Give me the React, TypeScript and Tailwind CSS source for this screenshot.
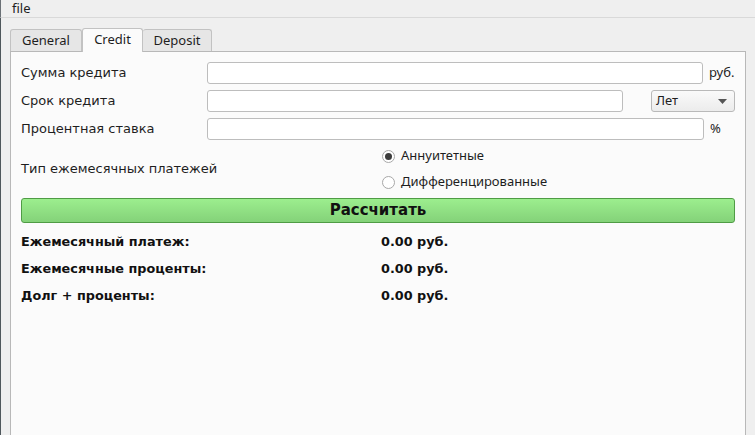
import React from 'react';

const font = { fontFamily: '"Noto Sans", "Open Sans", sans-serif' };
const dejavu = { fontFamily: '"DejaVu Sans", "Noto Sans", sans-serif' };

const Radio = ({ checked, label }: { checked?: boolean; label: string }) => (
  <div className="flex items-center h-[26px]">
    <span className="w-[13px] h-[13px] rounded-full border border-[#a8a8a8] bg-white flex items-center justify-center">
      {checked && <span className="w-[7px] h-[7px] rounded-full bg-[#3c3c3c]" />}
    </span>
    <span className="ml-[6px]">{label}</span>
  </div>
);

const Input = ({ width }: { width: string }) => (
  <div className={`${width} h-[22px] bg-white border border-[#bdbdbd] rounded-[3px]`} />
);

const Label = ({ text, width = 'w-[186px]' }: { text: string; width?: string }) => (
  <span style={dejavu} className={`${width} text-[13px]`}>
    {text}
  </span>
);

const ResultRow = ({ label }: { label: string }) => (
  <div style={dejavu} className="flex items-center h-[27px] font-bold text-[12.8px] text-[#111]">
    <span className="w-[360px]">{label}</span>
    <span>0.00 руб.</span>
  </div>
);

export default function App() {
  return (
    <div style={font} className="w-[755px] h-[435px] overflow-hidden bg-[#efefef] text-[13px] text-[#1e1e1e] flex flex-col">
      <div className="h-[18px] shrink-0 flex items-center border-b border-[#d9d9d9] border-l border-l-[#6b7176] pl-[11px] text-[13px]">
        file
      </div>
      <div className="flex-1 flex flex-col pl-[9px] pr-[9px] pt-[9px] border-l border-l-[#4f575c]">
        <div className="flex items-end h-[24px]">
          <div className="w-[72px] h-[22px] border border-[#c2c2c2] border-b-0 rounded-t-[3px] bg-[#e6e6e6] flex items-center justify-center">
            General
          </div>
          <div className="w-[61px] h-[24px] -mb-px z-10 border border-[#c2c2c2] border-b-0 rounded-t-[3px] bg-[#fbfbfb] flex items-center justify-center pb-[2px]">
            Credit
          </div>
          <div className="w-[69px] h-[22px] border border-[#c2c2c2] border-b-0 border-l-0 rounded-t-[3px] bg-[#e6e6e6] flex items-center justify-center">
            Deposit
          </div>
        </div>
        <div className="flex-1 bg-[#fbfbfb] border border-b-0 border-[#b8b8b8] pt-[10px] pl-[10px] pr-[9px]">
          <div className="flex flex-col gap-[6px]">
            <div className="flex items-center">
              <Label text="Сумма кредита" />
              <Input width="w-[496px]" />
              <span className="ml-[6px]">руб.</span>
            </div>
            <div className="flex items-center">
              <Label text="Срок кредита" />
              <Input width="w-[416px]" />
              <div className="ml-[28px] w-[84px] h-[22px] border border-[#b9b9b9] rounded-[3px] bg-gradient-to-b from-[#fafafa] to-[#ececec] flex items-center justify-between pl-[4px] pr-[7px]">
                <span>Лет</span>
                <svg width="9" height="5" viewBox="0 0 9 5">
                  <path d="M0 0 H9 L4.5 5 Z" fill="#555" />
                </svg>
              </div>
            </div>
            <div className="flex items-center">
              <Label text="Процентная ставка" />
              <Input width="w-[497px]" />
              <span className="ml-[6px]">%</span>
            </div>
          </div>
          <div className="flex items-center mt-[3px]">
            <Label text="Тип ежемесячных платежей" width="w-[361px]" />
            <div className="flex flex-col">
              <Radio checked label="Аннуитетные" />
              <Radio label="Дифференцированные" />
            </div>
          </div>
          <button
            style={dejavu}
            className="mt-[3px] w-[714px] h-[25px] rounded-[3px] border border-[#4f9c45] bg-gradient-to-b from-[#9cee8e] to-[#84d279] font-bold text-[15px] text-[#111] flex items-center justify-center"
          >
            Рассчитать
          </button>
          <div className="mt-[5px] flex flex-col">
            <ResultRow label="Ежемесячный платеж:" />
            <ResultRow label="Ежемесячные проценты:" />
            <ResultRow label="Долг + проценты:" />
          </div>
        </div>
      </div>
    </div>
  );
}
